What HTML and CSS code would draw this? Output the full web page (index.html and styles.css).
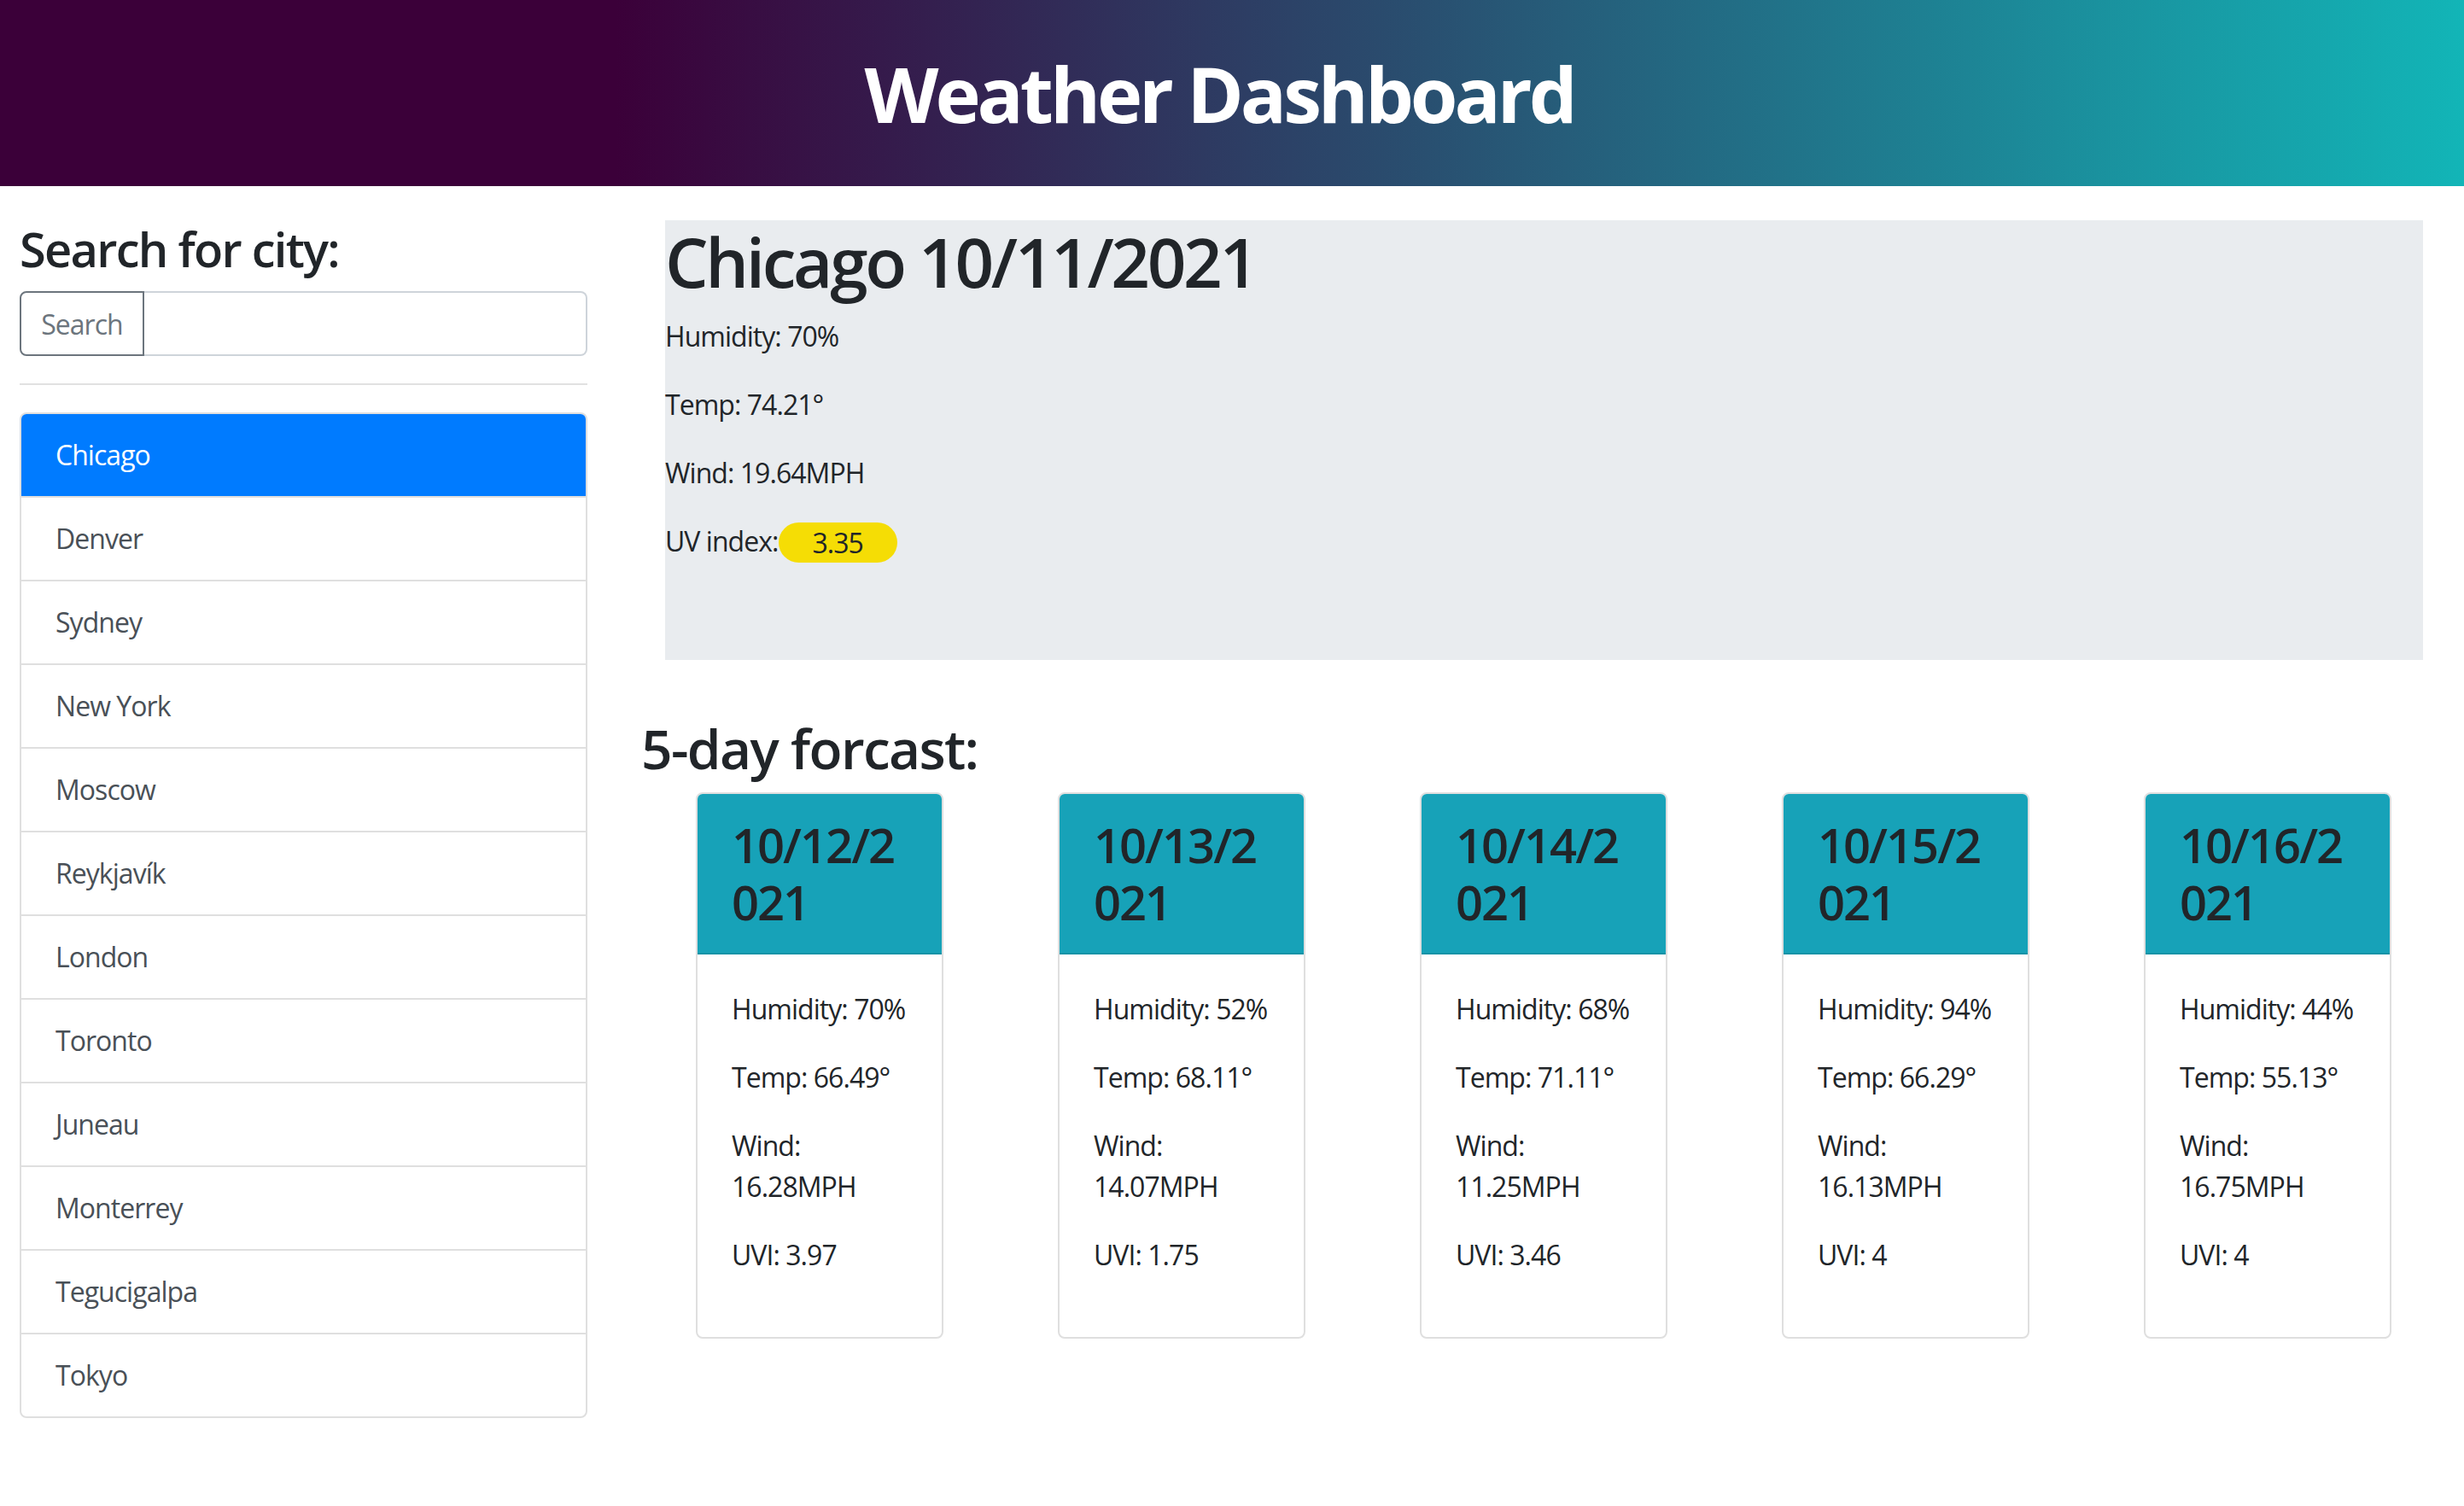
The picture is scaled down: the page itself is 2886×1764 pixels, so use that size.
FILE: index.html
```html
<!DOCTYPE html>
<html lang="en">
<head>
<meta charset="utf-8">
<title>Weather Dashboard</title>
<link rel="stylesheet" href="styles.css">
</head>
<body>
<header class="hero">
  <h1 class="hero-title">Weather Dashboard</h1>
</header>
<div class="page">
  <aside class="sidebar">
    <h3 class="search-title">Search for city:</h3>
    <div class="search-group">
      <button class="search-btn" type="button">Search</button>
      <input class="search-input" type="text" aria-label="city">
    </div>
    <hr class="divider">
    <ul class="city-list">
      <li class="city active">Chicago</li>
      <li class="city">Denver</li>
      <li class="city">Sydney</li>
      <li class="city">New York</li>
      <li class="city">Moscow</li>
      <li class="city">Reykjavík</li>
      <li class="city">London</li>
      <li class="city">Toronto</li>
      <li class="city">Juneau</li>
      <li class="city">Monterrey</li>
      <li class="city">Tegucigalpa</li>
      <li class="city">Tokyo</li>
    </ul>
  </aside>
  <main class="main">
    <section class="current">
      <h1 class="current-title">Chicago 10/11/2021</h1>
      <p class="stat">Humidity: 70%</p>
      <p class="stat">Temp: 74.21°</p>
      <p class="stat">Wind: 19.64MPH</p>
      <p class="stat">UV index:<span class="uv">3.35</span></p>
    </section>
    <h2 class="forecast-title">5-day forcast:</h2>
    <div class="forecast">
      <div class="card">
        <div class="card-header"><h3 class="card-date">10/12/2021</h3></div>
        <div class="card-body"><p>Humidity: 70%</p><p>Temp: 66.49°</p><p>Wind: 16.28MPH</p><p>UVI: 3.97</p></div>
      </div>
      <div class="card">
        <div class="card-header"><h3 class="card-date">10/13/2021</h3></div>
        <div class="card-body"><p>Humidity: 52%</p><p>Temp: 68.11°</p><p>Wind: 14.07MPH</p><p>UVI: 1.75</p></div>
      </div>
      <div class="card">
        <div class="card-header"><h3 class="card-date">10/14/2021</h3></div>
        <div class="card-body"><p>Humidity: 68%</p><p>Temp: 71.11°</p><p>Wind: 11.25MPH</p><p>UVI: 3.46</p></div>
      </div>
      <div class="card">
        <div class="card-header"><h3 class="card-date">10/15/2021</h3></div>
        <div class="card-body"><p>Humidity: 94%</p><p>Temp: 66.29°</p><p>Wind: 16.13MPH</p><p>UVI: 4</p></div>
      </div>
      <div class="card">
        <div class="card-header"><h3 class="card-date">10/16/2021</h3></div>
        <div class="card-body"><p>Humidity: 44%</p><p>Temp: 55.13°</p><p>Wind: 16.75MPH</p><p>UVI: 4</p></div>
      </div>
    </div>
  </main>
</div>
</body>
</html>
```
FILE: styles.css
```css
* { box-sizing: border-box; }

html, body {
  margin: 0;
  padding: 0;
  background: #ffffff;
}

body {
  font-family: "Open Sans", "Noto Sans", sans-serif;
  font-size: 32px;
  line-height: 1.5;
  color: #212529;
  letter-spacing: -0.03em;
}

.hero {
  height: 218px;
  background: linear-gradient(to right, #3b0039 25%, #12b5b7 100%);
  display: flex;
  align-items: center;
  justify-content: center;
  padding-right: 30px;
}

.hero-title {
  margin: 0;
  color: #ffffff;
  font-size: 90px;
  font-weight: 700;
  line-height: 1.2;
  letter-spacing: -0.045em;
}

.page {
  display: flex;
  align-items: flex-start;
  padding-top: 40px;
}

.sidebar {
  width: 665px;
  margin-left: 23px;
  flex: none;
}

.search-title {
  margin: 0 0 16px;
  font-size: 56px;
  font-weight: 600;
  line-height: 1.2;
  letter-spacing: -0.031em;
}

.search-group {
  display: flex;
  height: 76px;
}

.search-btn {
  font-family: inherit;
  font-size: 32px;
  letter-spacing: inherit;
  color: #6c757d;
  background: #ffffff;
  border: 2px solid #6c757d;
  border-radius: 8px 0 0 8px;
  padding: 0 22px;
  width: 146px;
  flex: none;
}

.search-input {
  flex: 1;
  min-width: 0;
  border: 2px solid #ced4da;
  border-left: none;
  border-radius: 0 8px 8px 0;
  font-size: 32px;
  background: #ffffff;
}

.divider {
  margin: 32px 0;
  border: 0;
  border-top: 2px solid #e1e1e1;
  height: 0;
}

.city-list {
  list-style: none;
  margin: 0;
  padding: 0;
  border: 2px solid #dfdfdf;
  border-radius: 8px;
  overflow: hidden;
}

.city {
  padding: 24px 40px;
  color: #495057;
  border-top: 2px solid #dfdfdf;
  line-height: 48px;
}

.city:first-child { border-top: none; }

.city.active {
  background: #007bff;
  color: #ffffff;
  margin: -2px -2px 0;
  padding: 26px 42px 24px;
}

.main {
  flex: 1;
  margin-left: 63px;
  margin-right: 48px;
}

.current {
  margin-left: 28px;
  background: #e9ecef;
  padding: 0 0 82px;
}

.current-title {
  margin: 0 0 16px;
  font-size: 80px;
  font-weight: 600;
  line-height: 1.2;
  letter-spacing: -0.042em;
}

.stat {
  margin: 0 0 32px;
}

.uv {
  display: inline-block;
  background: #f5dd05;
  border-radius: 24px;
  padding: 0 40px;
  line-height: 47px;
  vertical-align: top;
  margin-top: 2px;
}

.forecast-title {
  margin: 66px 0 12px;
  font-size: 64px;
  font-weight: 600;
  line-height: 1.2;
  letter-spacing: -0.026em;
}

.forecast {
  display: flex;
  gap: 134px;
  padding-left: 64px;
}

.card {
  width: 290px;
  flex: none;
  border: 2px solid #dfdfdf;
  border-radius: 8px;
  overflow: hidden;
  background: #ffffff;
}

.card-header {
  background: #17a2b8;
  padding: 26px 40px;
  border-bottom: 2px solid #1793a6;
}

.card-date {
  margin: 0;
  font-size: 56px;
  font-weight: 600;
  line-height: 1.2;
  letter-spacing: -0.035em;
  word-break: break-all;
  color: #212529;
}

.card-body {
  padding: 40px;
}

.card-body p {
  margin: 0 0 32px;
}
```
